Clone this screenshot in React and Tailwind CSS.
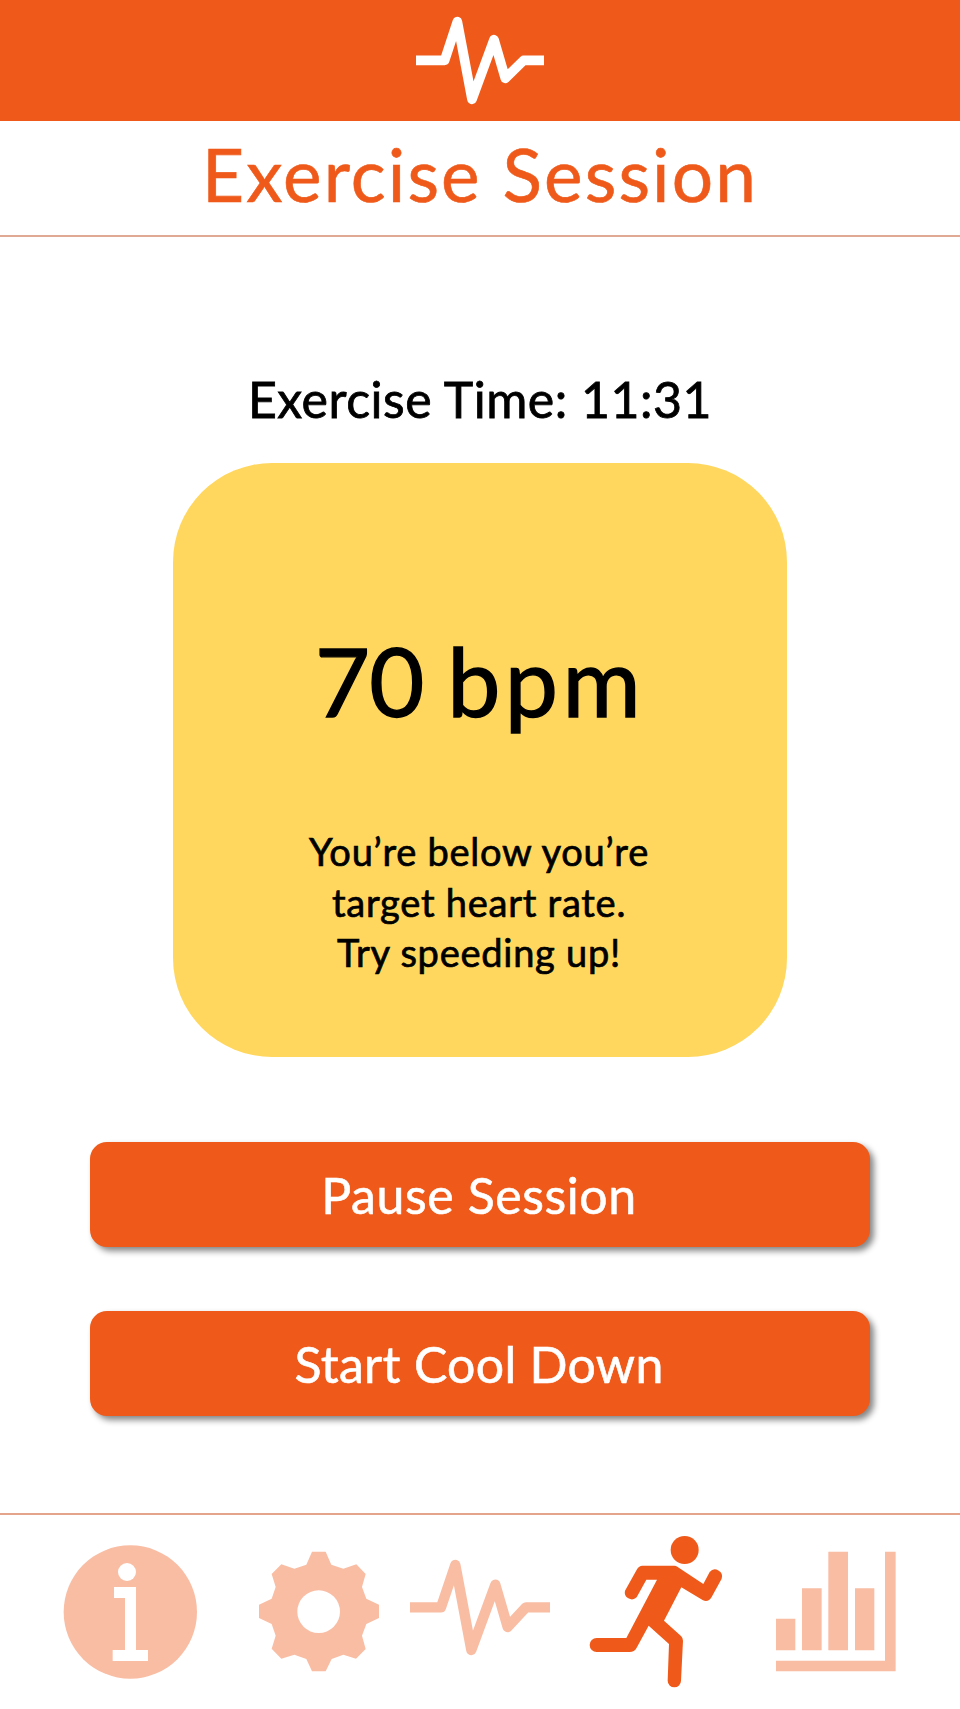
import React from "react";

function PulseIcon({ className, viewBox, d, width }) {
  return (
    <svg className={className} viewBox={viewBox} fill="none" stroke="currentColor" strokeWidth={width} strokeLinejoin="round">
      <path d={d} />
    </svg>
  );
}

function ActionButton({ children, label }) {
  return (
    <button className="flex h-[105px] w-[780px] items-center justify-center rounded-[17px] bg-[#ef5a1a] pr-[2px] text-white shadow-[4px_4px_6px_rgba(0,0,0,0.48)]">
      <span className={label}>{children}</span>
    </button>
  );
}

export default function App() {
  return (
    <div className="flex h-[1709px] w-[960px] flex-col overflow-hidden bg-white font-['Lato',sans-serif] text-black">
      <header className="flex h-[121px] shrink-0 justify-center bg-[#ef5a1a] text-white">
        <PulseIcon
          className="h-[120px] w-[160px]"
          viewBox="0 0 480 360"
          d="M48 181H134L172 65L216 298L282 119L316 235L371 181H432"
          width="29"
        />
      </header>

      <div className="flex h-[116px] shrink-0 items-center justify-center border-b-2 border-[#dfa994] pb-[8px]">
        <h1 className="whitespace-nowrap text-[73px] leading-[100px] tracking-[2.1px] text-[#ef5a1a] [-webkit-text-stroke:0.6px_#ef5a1a]">Exercise Session</h1>
      </div>

      <main className="flex flex-col items-center">
        <p className="mt-[128px] h-[68px] whitespace-nowrap text-[50px] leading-[68px] tracking-[0.5px] [-webkit-text-stroke:0.8px_black]">Exercise Time: 11:31</p>

        <section className="mt-[30px] flex h-[594px] w-[614px] flex-col items-center rounded-[99px] bg-[#ffd75e]">
          <p className="mt-[157px] whitespace-nowrap text-[95px] leading-[120px] [-webkit-text-stroke:1.4px_black]">
            <span className="tracking-[-0.8px]">70 </span>
            <span className="tracking-[4.4px]">bpm</span>
          </p>
          <div className="mt-[86px] pr-[2px] text-center text-[38px] leading-[50.5px] tracking-[0.75px] [-webkit-text-stroke:0.7px_black]">
            <p>You’re below you’re</p>
            <p>target heart rate.</p>
            <p>Try speeding up!</p>
          </div>
        </section>

        <div className="mt-[85px] flex flex-col gap-16">
          <ActionButton label="text-[50px] leading-[60px] tracking-[0.6px] [-webkit-text-stroke:0.6px_white]">Pause Session</ActionButton>
          <ActionButton label="text-[50px] leading-[60px] tracking-[0.3px] [-webkit-text-stroke:0.6px_white]">Start Cool Down</ActionButton>
        </div>
      </main>

      <nav className="mt-auto flex h-[196px] shrink-0 border-t-2 border-[#e3a48b] pt-[15px] pl-[50px] text-[#f9bda4]">
        <svg className="h-[160px] w-[180px]" viewBox="0 0 540 480">
          <circle cx="241" cy="246" r="200" fill="currentColor" />
          <circle cx="231" cy="126" r="27" fill="white" />
          <path d="M192 171H258V360H294V393H188V360H225V204H192Z" fill="white" />
        </svg>
        <svg className="h-[160px] w-[168px]" viewBox="-45 -15 504 480">
          <path
            fill="currentColor"
            d="M201 50H242L259 89L295 101L334 88L362 117L351 156L364 191L402 209V249L364 267L351 302L362 342L333 371L295 359L260 372L242 409H201L184 372L148 359L109 371L80 341L92 302L80 267L42 249V209L80 191L92 156L80 117L109 88L148 101L184 89Z"
          />
          <circle cx="221" cy="230" r="64" fill="white" />
        </svg>
        <PulseIcon
          className="h-[160px] w-[172px]"
          viewBox="-6 -30 516 480"
          d="M30 202H123L166 75L214 330L286 134L323 261L378 202H450"
          width="31"
        />
        <svg className="h-[160px] w-[180px] text-[#ef5a1a]" viewBox="-30 15 540 480" fill="currentColor">
          <circle cx="314" cy="75" r="42" />
          <path d="M187 122H283Q288 122 293 126L370 177L389 141A21 21 0 0 1 425 161L395 216Q386 232 369 226L304 187L252 287L303 333Q309 339 309 347L303 467A20 20 0 0 1 263 467L267 357L206 302L170 368Q163 381 149 381H50A21 21 0 0 1 50 339H139L231 164H199L170 217A21 21 0 0 1 135 197L171 133Q177 122 187 122Z" />
        </svg>
        <svg className="h-[160px] w-[165px]" viewBox="-45 -15 495 480" fill="currentColor">
          <path d="M33 251H91V346H33ZM111 160H170V346H111ZM190 50H249V346H190ZM270 160H328V346H270ZM360 50H392V409H33V377H360Z" />
        </svg>
      </nav>
    </div>
  );
}
